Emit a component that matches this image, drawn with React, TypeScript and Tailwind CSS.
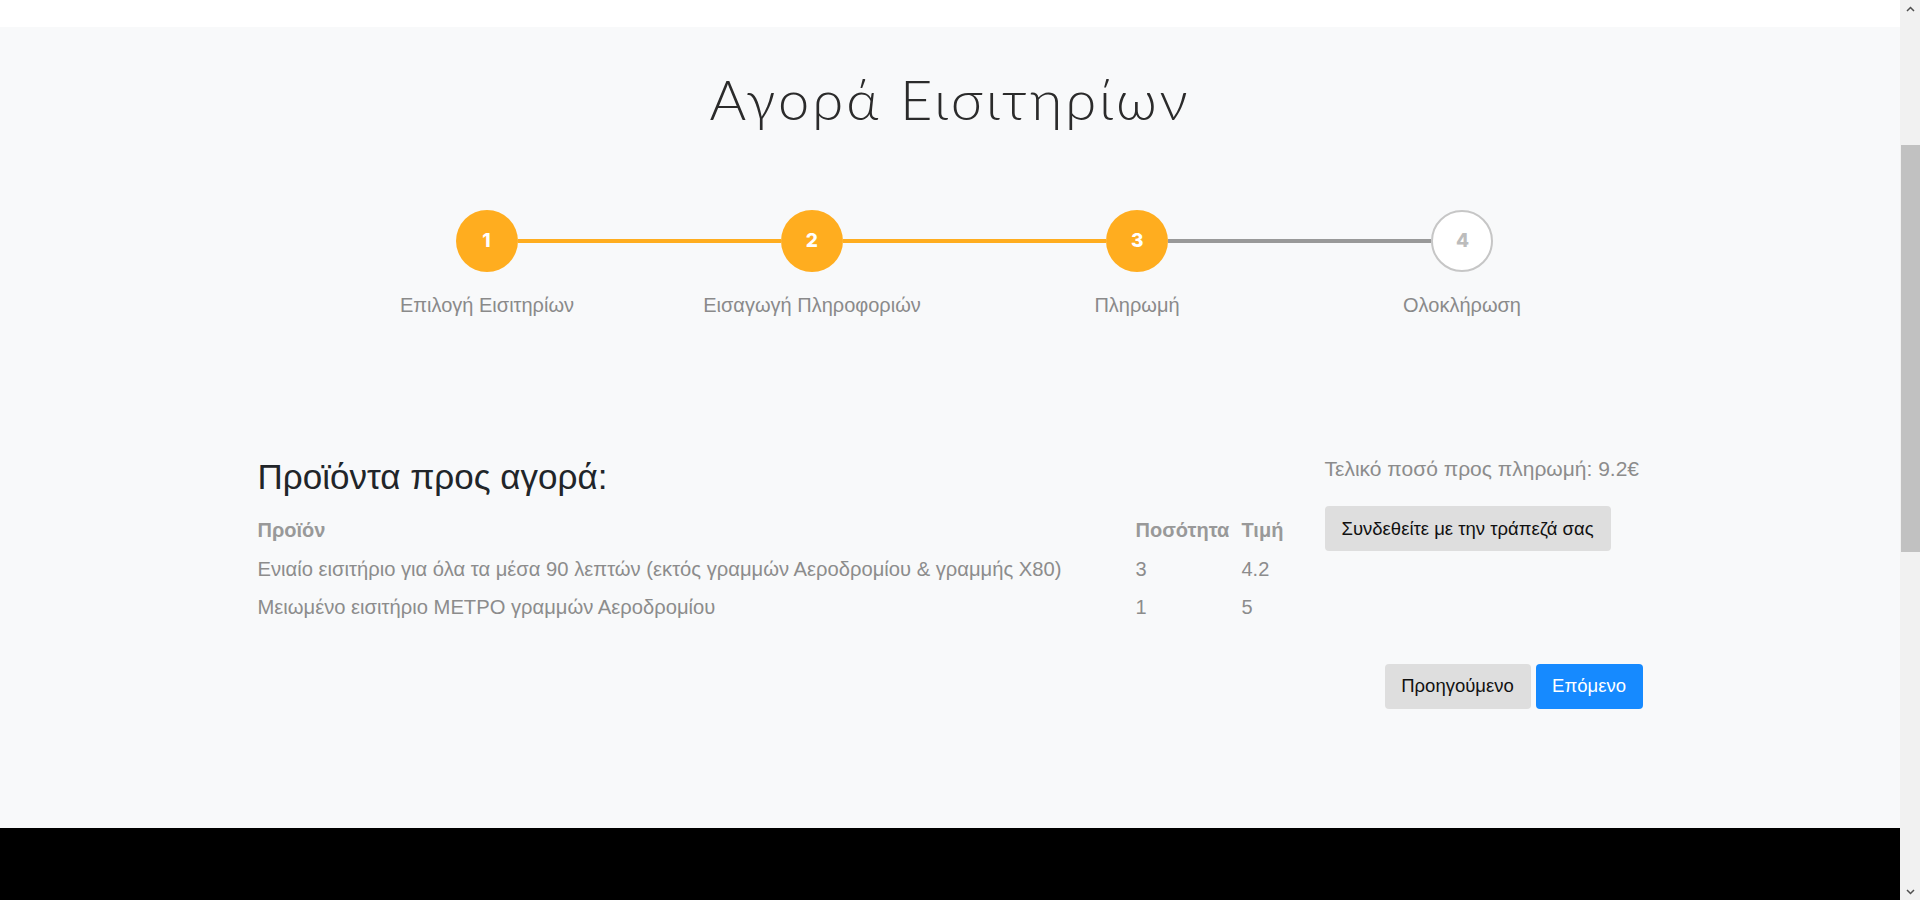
const steps = [
    { n: 1, label: "Επιλογή Εισιτηρίων", done: true },
    { n: 2, label: "Εισαγωγή Πληροφοριών", done: true },
    { n: 3, label: "Πληρωμή", done: true },
    { n: 4, label: "Ολοκλήρωση", done: false },
]

const items = [
    { name: "Ενιαίο εισιτήριο για όλα τα μέσα 90 λεπτών (εκτός γραμμών Αεροδρομίου & γραμμής Χ80)", qty: "3", price: "4.2" },
    { name: "Μειωμένο εισιτήριο ΜΕΤΡΟ γραμμών Αεροδρομίου", qty: "1", price: "5" },
]

const Stepper = () => {
    return (
        <div className="w-[1300px] ml-[67px]">
            {/* circles + connectors */}
            <div className="flex items-center mx-[131px]">
                {steps.map((s, i) => (
                    <div key={s.n} className={i < steps.length - 1 ? "flex items-center flex-1" : "flex items-center"}>
                        {s.done ? (
                            <div className="w-[62px] h-[62px] rounded-full bg-[#ffad1f] flex items-center justify-center text-white text-[19px] font-extrabold" style={{ fontFamily: "Inter, sans-serif" }}>
                                {s.n}
                            </div>
                        ) : (
                            <div className="w-[62px] h-[62px] rounded-full bg-white border-2 border-[#c6c6c6] flex items-center justify-center text-[#bcbcbc] text-[19px] font-extrabold" style={{ fontFamily: "Inter, sans-serif" }}>
                                {s.n}
                            </div>
                        )}
                        {i < steps.length - 1 && (
                            <div className={steps[i + 1].done ? "flex-1 h-[4px] bg-[#ffad1f]" : "flex-1 h-[4px] bg-[#999999]"} />
                        )}
                    </div>
                ))}
            </div>
            <div className="grid grid-cols-4 mt-[18px]">
                {steps.map((s) => (
                    <div key={s.n} className="text-center text-[20px] leading-[30px] text-[#8a8a8a]">{s.label}</div>
                ))}
            </div>
        </div>
    )
}

// the browser's scrollbar, as it shows in the screenshot
const Scrollbar = () => (
    <div className="w-[20px] bg-[#f1f1f1] flex flex-col items-center">
        <div className="h-[17px] flex items-center justify-center">
            <svg width="9" height="6" viewBox="0 0 9 6"><path d="M1 5 L4.5 1.5 L8 5" fill="none" stroke="#505050" strokeWidth="1.5" /></svg>
        </div>
        <div className="w-[19px] h-[407px] mt-[128px] bg-[#c1c1c1]" />
        <div className="flex-1" />
        <div className="h-[17px] flex items-center justify-center">
            <svg width="9" height="6" viewBox="0 0 9 6"><path d="M1 1 L4.5 4.5 L8 1" fill="none" stroke="#505050" strokeWidth="1.5" /></svg>
        </div>
    </div>
)

const App = () => {
    return (
        <div className="flex h-[900px] overflow-hidden" style={{ fontFamily: "'Liberation Sans', Arial, sans-serif" }}>
            <div className="flex-1 flex flex-col">
                <div className="bg-white h-[27px]" />

                <div className="bg-[#f8f9fa] h-[801px] pt-[38px]">
                    <h1 className="text-center text-[56px] leading-[67px] font-light text-[#2b2b2b] tracking-[3px]" style={{ fontFamily: "Lato, sans-serif" }}>
                        Αγορά Εισιτηρίων
                    </h1>

                    <div className="w-[1385px] mx-auto mt-[78px]">
                        <Stepper />

                        <div className="flex gap-[35px] mt-[135px]">
                            <div className="flex-1">
                                <h2 className="text-[35px] leading-[43px] text-[#212529]">Προϊόντα προς αγορά:</h2>
                                <div className="grid grid-cols-[1fr_106px_48px] mt-[13px] text-[20px] leading-[26.5px] text-[#8c8c8c]">
                                    <div className="py-[6px] font-bold text-[#999999]">Προϊόν</div>
                                    <div className="py-[6px] font-bold text-[#999999]">Ποσότητα</div>
                                    <div className="py-[6px] font-bold text-[#999999]">Τιμή</div>
                                    {items.map((it) => (
                                        <>
                                            <div key={it.name} className="py-[6px] text-[20.2px]">{it.name}</div>
                                            <div className="py-[6px]">{it.qty}</div>
                                            <div className="py-[6px]">{it.price}</div>
                                        </>
                                    ))}
                                </div>
                            </div>

                            <div className="w-[318px]">
                                <p className="text-[21px] leading-[27px] text-[#8c8c8c]">Τελικό ποσό προς πληρωμή: 9.2€</p>
                                <button className="mt-[24px] h-[45px] px-[17px] rounded-[4px] bg-[#dedede] text-[18.5px] text-[#111]">
                                    Συνδεθείτε με την τράπεζά σας
                                </button>
                            </div>
                        </div>

                        <div className="flex justify-end gap-[5px] mt-[37px]">
                            <button className="h-[45px] w-[146px] rounded-[4px] bg-[#dedede] text-[18.5px] text-[#111]">Προηγούμενο</button>
                            <button className="h-[45px] w-[107px] rounded-[4px] bg-[#168aff] text-[18.5px] text-white">Επόμενο</button>
                        </div>
                    </div>
                </div>

                <div className="bg-black flex-1" />
            </div>
            <Scrollbar />
        </div>
    )
}

export default App
